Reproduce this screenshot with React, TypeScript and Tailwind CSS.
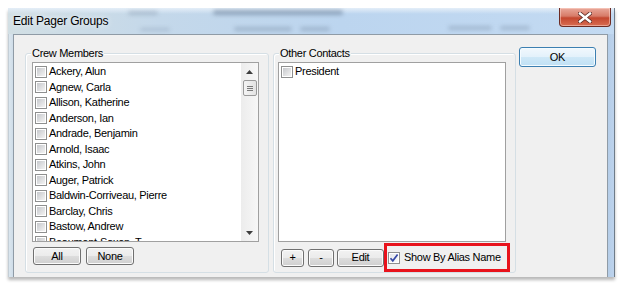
import clsx from "clsx"

const crewMembers = [
  "Ackery, Alun",
  "Agnew, Carla",
  "Allison, Katherine",
  "Anderson, Ian",
  "Andrade, Benjamin",
  "Arnold, Isaac",
  "Atkins, John",
  "Auger, Patrick",
  "Baldwin-Corriveau, Pierre",
  "Barclay, Chris",
  "Bastow, Andrew",
  "Beaumont-Saxon, T.",
]

function Checkbox({ checked }: { checked?: boolean }) {
  return (
    <span className="flex h-[12px] w-[12px] shrink-0 border border-[#8e8f8f] bg-white p-[1px]">
      <span
        className={clsx(
          "flex h-full w-full items-center justify-center",
          checked
            ? "bg-[linear-gradient(135deg,#e4e6ea,#fbfbfb)]"
            : "bg-[linear-gradient(135deg,#c6c8cc,#f3f3f3)]"
        )}
      >
        {checked && (
          <svg width="10" height="10" viewBox="0 0 10 10" className="-m-[1px]">
            <path d="M1.5 5.2 L3.8 7.8 L8.6 1.6" fill="none" stroke="#3548a6" strokeWidth="1.7" />
          </svg>
        )}
      </span>
    </span>
  )
}

function WinButton({ children, className }: { children: React.ReactNode; className?: string }) {
  return (
    <button
      type="button"
      className={clsx(
        "flex h-[18px] shrink-0 items-center justify-center rounded-[3px] border border-[#707070] bg-[linear-gradient(#f2f2f2_0%,#ebebeb_50%,#dddddd_51%,#cfcfcf_100%)] text-[11px] leading-none text-black shadow-[inset_0_0_0_1px_#fbfbfb]",
        className
      )}
    >
      {children}
    </button>
  )
}

function Row({ label, checked }: { label: string; checked?: boolean }) {
  return (
    <div className="flex h-[15.5px] shrink-0 items-center gap-[2px] whitespace-nowrap">
      <Checkbox checked={checked} />
      <span>{label}</span>
    </div>
  )
}

function Scrollbar() {
  return (
    <div className="flex w-[17px] shrink-0 flex-col items-center bg-[linear-gradient(90deg,#ececec,#f7f7f7)]">
      <div className="flex h-[17px] w-full items-center justify-center">
        <svg width="7" height="4" viewBox="0 0 7 4">
          <path d="M0 4 L3.5 0 L7 4 Z" fill="#3d3d3d" />
        </svg>
      </div>
      <div className="flex h-[16px] w-[14px] flex-col items-center justify-center gap-[1px] rounded-[2px] border border-[#9a9a9a] bg-[linear-gradient(90deg,#f4f4f4,#e3e3e3)]">
        <span className="h-[1px] w-[6px] bg-[#7a7a7a]" />
        <span className="h-[1px] w-[6px] bg-[#7a7a7a]" />
        <span className="h-[1px] w-[6px] bg-[#7a7a7a]" />
      </div>
      <div className="flex-1" />
      <div className="flex h-[17px] w-full items-center justify-center">
        <svg width="7" height="4" viewBox="0 0 7 4">
          <path d="M0 0 L3.5 4 L7 0 Z" fill="#3d3d3d" />
        </svg>
      </div>
    </div>
  )
}

function GroupBox({ title, className, children }: { title: string; className?: string; children: React.ReactNode }) {
  return (
    <div
      className={clsx(
        "relative h-[220px] shrink-0 rounded-[3px] border border-[#d5dfe5] shadow-[inset_1px_1px_0_#ffffff]",
        className
      )}
    >
      <span className="absolute -top-[7px] left-[5px] bg-[#f0f0f0] px-[1px] text-[11px] leading-[13px]">
        {title}
      </span>
      {children}
    </div>
  )
}

export default function App() {
  return (
    <div className="h-[288px] w-[624px] overflow-hidden bg-white pl-[8px] pt-[8px] font-['Liberation_Sans',Arial,sans-serif] tracking-[-0.3px] text-black">
      <div className="flex h-[269px] w-[607px] flex-col shadow-[0_3px_3px_rgba(0,0,0,0.28)]">
        {/* title bar */}
        <div className="relative flex h-[26px] shrink-0 items-center overflow-hidden border-r border-[#6e7b88] bg-[linear-gradient(90deg,#d2dfe4_0%,#c4d8ea_25%,#bcd5ef_55%,#c3daf2_100%)] pl-[5px]">
          <div className="absolute inset-x-0 top-0 h-[6px] bg-[linear-gradient(#e4eef8,transparent)]" />
          <div className="absolute left-[120px] top-[3px] h-[4px] w-[30px] rounded-full bg-[#8d9fb4] opacity-50 blur-[2px]" />
          <div className="absolute left-[205px] top-[2px] h-[5px] w-[130px] rounded-full bg-[#6e839c] opacity-60 blur-[2px]" />
          <div className="absolute left-[132px] top-[20px] h-[3px] w-[30px] rounded-full bg-[#8fa3ba] opacity-50 blur-[2px]" />
          <div className="absolute left-[226px] top-[19px] h-[4px] w-[58px] rounded-full bg-[#7e93ab] opacity-50 blur-[2px]" />
          <div className="absolute left-[292px] top-[19px] h-[4px] w-[30px] rounded-full bg-[#7e93ab] opacity-50 blur-[2px]" />
          <div className="absolute left-[440px] top-[18px] h-[4px] w-[44px] rounded-full bg-[#8599b0] opacity-50 blur-[2px]" />
          <div className="absolute left-[492px] top-[18px] h-[4px] w-[30px] rounded-full bg-[#8599b0] opacity-50 blur-[2px]" />
          <span className="relative text-[12px] tracking-[-0.2px] text-black [text-shadow:0_0_6px_#ffffff]">
            Edit Pager Groups
          </span>
          <div className="relative ml-auto mr-[3px] flex h-[19px] w-[52px] items-center justify-center self-start rounded-b-[4px] border border-t-0 border-[#6d2b23] bg-[linear-gradient(#e9a99b_0%,#d77b68_45%,#c4472f_55%,#d86d52_100%)] shadow-[inset_0_0_0_1px_rgba(255,220,210,0.5)]">
            <svg width="14" height="11" viewBox="0 0 14 11">
              <path d="M2 1.5 L12 9.5 M12 1.5 L2 9.5" stroke="#5a2a24" strokeWidth="4" strokeLinecap="square" />
              <path d="M2 1.5 L12 9.5 M12 1.5 L2 9.5" stroke="#ffffff" strokeWidth="2.4" strokeLinecap="square" />
            </svg>
          </div>
        </div>

        {/* body */}
        <div className="flex min-h-0 flex-1">
          <div className="w-[5px] shrink-0 border-l border-[#c4ced6] bg-[linear-gradient(90deg,#dbe6ee,#cfdde9)]" />
          <div className="flex flex-1 border border-b-0 border-[#8f9ba6] bg-[#f0f0f0] pl-[11px] pt-[18px]">
            <GroupBox title="Crew Members" className="w-[244px] pl-[6px] pt-[8px]">
              <div className="flex h-[180px] w-[227px] border border-[#a0a0a0] bg-white">
                <div className="flex min-w-0 flex-1 flex-col overflow-hidden pl-[2px] pt-[1px] text-[11px] leading-[15.5px]">
                  {crewMembers.map((name) => (
                    <Row key={name} label={name} />
                  ))}
                </div>
                <Scrollbar />
              </div>
              <div className="ml-[1px] mt-[5px] flex gap-[5px]">
                <WinButton className="w-[48px]">All</WinButton>
                <WinButton className="w-[48px]">None</WinButton>
              </div>
            </GroupBox>

            <GroupBox title="Other Contacts" className="ml-[4px] w-[243px] pl-[4px] pt-[8px]">
              <div className="flex h-[180px] w-[228px] flex-col border border-[#a0a0a0] bg-white pl-[2px] pt-[1px] text-[11px] leading-[15.5px]">
                <Row label="President" />
              </div>
              <div className="ml-[3px] mt-[1px] flex items-center">
                <WinButton className="w-[23px]">+</WinButton>
                <WinButton className="ml-[4px] w-[26px]">-</WinButton>
                <WinButton className="ml-[3px] w-[47px]">Edit</WinButton>
                <div className="flex h-[29px] w-[126px] shrink-0 items-center gap-[4px] border-[3px] border-[#e8131c] pl-[1px] text-[11px]">
                  <Checkbox checked />
                  <span className="whitespace-nowrap">Show By Alias Name</span>
                </div>
              </div>
            </GroupBox>

            <div className="ml-[3px] mt-[-6px]">
              <button
                type="button"
                className="flex h-[20px] w-[77px] items-center justify-center rounded-[3px] border border-[#3c7fb1] bg-[linear-gradient(#f1f8fd_0%,#e3f1fb_50%,#cfe8f7_51%,#bfe0f5_100%)] text-[11px] leading-none shadow-[inset_0_0_0_1px_#f4fbff]"
              >
                OK
              </button>
            </div>
          </div>
          <div className="w-[7px] shrink-0 border-r border-[#6e7b88] bg-[linear-gradient(90deg,#b5cde8,#bdd3ec)]" />
        </div>
      </div>
    </div>
  )
}
